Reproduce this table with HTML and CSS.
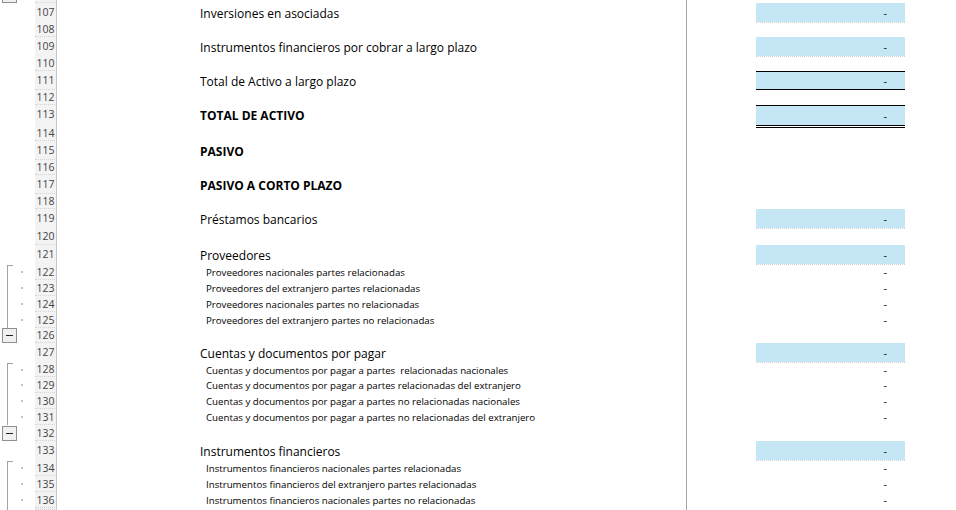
FILE: index.html
```html
<!DOCTYPE html>
<html lang="es">
<head>
<meta charset="utf-8">
<title>Hoja</title>
<link rel="stylesheet" href="styles.css">
</head>
<body>
<div class="sheet">
  <div class="row h3"><div class="ol"><div class="btn-tail"></div></div><div class="rh"></div><div class="lab"></div></div>
  <div class="row h19"><div class="ol"></div><div class="rh">107</div><div class="lab main">Inversiones en asociadas</div><div class="val blue">-</div></div>
  <div class="row h15"><div class="ol"></div><div class="rh">108</div><div class="lab"></div></div>
  <div class="row h19"><div class="ol"></div><div class="rh">109</div><div class="lab main">Instrumentos financieros por cobrar a largo plazo</div><div class="val blue">-</div></div>
  <div class="row h15"><div class="ol"></div><div class="rh">110</div><div class="lab"></div></div>
  <div class="row h19"><div class="ol"></div><div class="rh">111</div><div class="lab main">Total de Activo a largo plazo</div><div class="val blue tb">-</div></div>
  <div class="row h15"><div class="ol"></div><div class="rh">112</div><div class="lab"></div></div>
  <div class="row h21"><div class="ol"></div><div class="rh">113</div><div class="lab main bold">TOTAL DE ACTIVO</div><div class="val blue dbl">-</div></div>
  <div class="row h15"><div class="ol"></div><div class="rh">114</div><div class="lab"></div></div>
  <div class="row h19"><div class="ol"></div><div class="rh">115</div><div class="lab main bold">PASIVO</div></div>
  <div class="row h15"><div class="ol"></div><div class="rh">116</div><div class="lab"></div></div>
  <div class="row h19"><div class="ol"></div><div class="rh">117</div><div class="lab main bold">PASIVO A CORTO PLAZO</div></div>
  <div class="row h15"><div class="ol"></div><div class="rh">118</div><div class="lab"></div></div>
  <div class="row h19"><div class="ol"></div><div class="rh">119</div><div class="lab main">Préstamos bancarios</div><div class="val blue">-</div></div>
  <div class="row h17"><div class="ol"></div><div class="rh">120</div><div class="lab"></div></div>
  <div class="row h19"><div class="ol"></div><div class="rh">121</div><div class="lab main">Proveedores</div><div class="val blue">-</div></div>
  <div class="row h16"><div class="ol"><div class="br br-top"></div><div class="pt"></div></div><div class="rh">122</div><div class="lab sub">Proveedores nacionales partes relacionadas</div><div class="val">-</div></div>
  <div class="row h16"><div class="ol"><div class="br"></div><div class="pt"></div></div><div class="rh">123</div><div class="lab sub">Proveedores del extranjero partes relacionadas</div><div class="val">-</div></div>
  <div class="row h16"><div class="ol"><div class="br"></div><div class="pt"></div></div><div class="rh">124</div><div class="lab sub">Proveedores nacionales partes no relacionadas</div><div class="val">-</div></div>
  <div class="row h16"><div class="ol"><div class="br"></div><div class="pt"></div></div><div class="rh">125</div><div class="lab sub">Proveedores del extranjero partes no relacionadas</div><div class="val">-</div></div>
  <div class="row h15"><div class="ol"><div class="btn"></div></div><div class="rh">126</div><div class="lab"></div></div>
  <div class="row h19"><div class="ol"></div><div class="rh">127</div><div class="lab main">Cuentas y documentos por pagar</div><div class="val blue">-</div></div>
  <div class="row h15"><div class="ol"><div class="br br-top"></div><div class="pt"></div></div><div class="rh">128</div><div class="lab sub">Cuentas y documentos por pagar a partes&nbsp; relacionadas nacionales</div><div class="val">-</div></div>
  <div class="row h16"><div class="ol"><div class="br"></div><div class="pt"></div></div><div class="rh">129</div><div class="lab sub">Cuentas y documentos por pagar a partes relacionadas del extranjero</div><div class="val">-</div></div>
  <div class="row h16"><div class="ol"><div class="br"></div><div class="pt"></div></div><div class="rh">130</div><div class="lab sub">Cuentas y documentos por pagar a partes no relacionadas nacionales</div><div class="val">-</div></div>
  <div class="row h16"><div class="ol"><div class="br"></div><div class="pt"></div></div><div class="rh">131</div><div class="lab sub">Cuentas y documentos por pagar a partes no relacionadas del extranjero</div><div class="val">-</div></div>
  <div class="row h16"><div class="ol"><div class="btn"></div></div><div class="rh">132</div><div class="lab"></div></div>
  <div class="row h19"><div class="ol"></div><div class="rh">133</div><div class="lab main">Instrumentos financieros</div><div class="val blue">-</div></div>
  <div class="row h16"><div class="ol"><div class="br br-top"></div><div class="pt"></div></div><div class="rh">134</div><div class="lab sub">Instrumentos financieros nacionales partes relacionadas</div><div class="val">-</div></div>
  <div class="row h16"><div class="ol"><div class="br"></div><div class="pt"></div></div><div class="rh">135</div><div class="lab sub">Instrumentos financieros del extranjero partes relacionadas</div><div class="val">-</div></div>
  <div class="row h16"><div class="ol"><div class="br"></div><div class="pt"></div></div><div class="rh">136</div><div class="lab sub">Instrumentos financieros nacionales partes no relacionadas</div><div class="val">-</div></div>
  <div class="row h2"><div class="ol"><div class="br"></div></div><div class="rh"></div><div class="lab"></div></div>
</div>
</body>
</html>
```

FILE: styles.css
```css
* { box-sizing: border-box; }
html, body { margin: 0; padding: 0; background: #ffffff; }
body {
  width: 956px;
  height: 510px;
  overflow: hidden;
  font-family: "Open Sans", "Noto Sans", sans-serif;
  color: #000000;
}
.sheet { display: flex; flex-direction: column; }

.row {
  display: grid;
  grid-template-columns: 35px 22px 630px 69px 149px;
}
.h2 { height: 2px; line-height: 2px; }
.h3 { height: 3px; line-height: 3px; }
.h15 { height: 15px; line-height: 15px; }
.h16 { height: 16px; line-height: 16px; }
.h17 { height: 17px; line-height: 17px; }
.h19 { height: 19px; line-height: 19px; }
.h21 { height: 21px; line-height: 19px; }

/* outline gutter */
.ol { display: flex; align-items: stretch; overflow: hidden; }
.br {
  margin-left: 7px;
  width: 6px;
  flex: none;
  border-left: 1px solid #a3a3a3;
}
.br-top { margin-top: 1px; border-top: 1px solid #a3a3a3; }
.pt {
  align-self: center;
  margin-left: 8px;
  width: 2px;
  height: 2px;
  background: #c2c2c2;
  flex: none;
}
.btn {
  align-self: flex-end;
  margin-left: 2px;
  width: 15px;
  height: 15px;
  flex: none;
  border: 1px solid #8e8e8e;
  background: #f1f1f1;
  display: flex;
  align-items: center;
  justify-content: center;
}
.btn::before {
  content: "";
  display: block;
  width: 7px;
  height: 1px;
  background: #222222;
}
.btn-tail {
  margin-left: 2px;
  width: 15px;
  height: 3px;
  flex: none;
  border: 1px solid #8e8e8e;
  border-top: none;
  background: #f1f1f1;
}

/* row header */
.rh {
  background: #f3f3f3;
  border-right: 1px solid #c6c6c6;
  border-bottom: 1px dotted #d4d4d4;
  font-size: 10.5px;
  color: #444444;
  text-align: center;
  overflow: hidden;
}

/* label column */
.lab {
  border-right: 1px solid #a6a6a6;
  white-space: nowrap;
  overflow: hidden;
}
.main { padding-left: 143px; padding-top: 1px; font-size: 12px; }
.bold { font-weight: 700; }
.sub { padding-left: 149px; font-size: 9.7px; padding-top: 1px; }

/* value column */
.val {
  grid-column: 5;
  text-align: right;
  padding-right: 18px;
  font-size: 11px;
  color: #111111;
}
.blue {
  background: #c4e6f5;
  background-clip: padding-box;
  border-bottom: 1px dotted #cfcfcf;
}
.tb {
  border-top: 1px solid #000000;
  border-bottom: 1px solid #000000;
  line-height: 17px;
}
.dbl {
  border-top: 1px solid #000000;
  border-bottom: 3px double #000000;
}
```
